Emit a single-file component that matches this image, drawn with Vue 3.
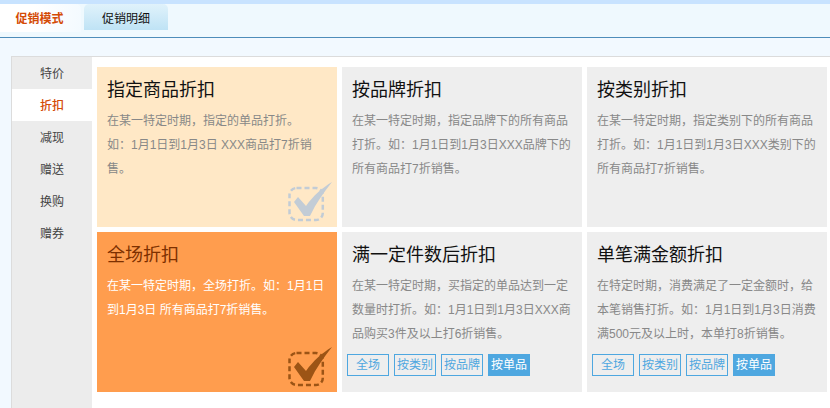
<script setup>
const tabs = [
  { label: '促销模式', active: true },
  { label: '促销明细', active: false },
]
const navItems = ['特价', '折扣', '减现', '赠送', '换购', '赠券']
const filters = ['全场', '按类别', '按品牌', '按单品']
const cards = [
  { title: '指定商品折扣', lines: ['在某一特定时期，指定的单品打折。', '如：1月1日到1月3日 XXX商品打7折销售。'], state: 'hover' },
  { title: '按品牌折扣', lines: ['在某一特定时期，指定品牌下的所有商品打折。如：1月1日到1月3日XXX品牌下的所有商品打7折销售。'] },
  { title: '按类别折扣', lines: ['在某一特定时期，指定类别下的所有商品打折。如：1月1日到1月3日XXX类别下的所有商品打7折销售。'] },
  { title: '全场折扣', lines: ['在某一特定时期，全场打折。如：1月1日到1月3日 所有商品打7折销售。'], state: 'selected' },
  { title: '满一定件数后折扣', lines: ['在某一特定时期，买指定的单品达到一定数量时打折。如：1月1日到1月3日XXX商品购买3件及以上打6折销售。'], filters: true },
  { title: '单笔满金额折扣', lines: ['在特定时期，消费满足了一定金额时，给本笔销售打折。如：1月1日到1月3日消费满500元及以上时，本单打8折销售。'], filters: true },
]
</script>

<template>
  <div class="page">
    <header class="tabbar">
      <div
        v-for="tab in tabs"
        :key="tab.label"
        class="tab"
        :class="{ active: tab.active }"
      >{{ tab.label }}</div>
    </header>

    <section class="panel">
      <nav class="side">
        <div
          v-for="item in navItems"
          :key="item"
          class="side-item"
          :class="{ current: item === '折扣' }"
        >{{ item }}</div>
      </nav>

      <main class="grid">
        <article
          v-for="card in cards"
          :key="card.title"
          class="card"
          :class="card.state"
        >
          <h2 class="title">{{ card.title }}</h2>
          <p v-for="line in card.lines" :key="line" class="desc">{{ line }}</p>

          <div v-if="card.filters" class="filters">
            <span
              v-for="(f, i) in filters"
              :key="f"
              class="filter"
              :class="{ on: i === 3 }"
            >{{ f }}</span>
          </div>

          <svg v-if="card.state" class="check" viewBox="0 0 46 42" width="46" height="42" aria-hidden="true">
            <rect x="2.5" y="6" width="33.3" height="32" rx="7" class="box" />
            <path d="M7 20 L11 15 L19 24 C26 14 35 6 45 0 C37 10 29 21 23 34 L17 34 Z" class="tick" />
          </svg>
        </article>
      </main>
    </section>
  </div>
</template>

<style>
html, body { margin: 0; background: #f2f9ff; }
</style>

<style scoped>
.page {
  width: 830px;
  height: 408px;
  overflow: hidden;
  background: #f2f9ff;
  font-family: "Liberation Sans", "Noto Sans CJK SC", sans-serif;
}
.tabbar {
  display: flex;
  align-items: flex-start;
  gap: 3px;
  height: 33px;
  border-top: 4px solid #c8e3ff;
  border-bottom: 1px solid #4e8dba;
  margin-bottom: 18px;
  background: #eff9fe;
}
.tab {
  width: 84px;
  height: 26px;
  border-radius: 5px 5px 0 0;
  background: linear-gradient(#e0f2fb, #bfe3f5);
  color: #111;
  font-size: 12px;
  line-height: 30px;
  text-align: center;
}
.tab.active {
  width: 79px;
  height: 28px;
  padding-right: 2px;
  border-radius: 0 5px 0 0;
  background: linear-gradient(100deg, #fff 40%, #f3faff);
  color: #d44b06;
  font-weight: 700;
}
.panel {
  display: flex;
  height: 352px;
  margin-left: 11px;
  border-top: 1px solid #dcdcdc;
  border-left: 1px solid #dcdcdc;
  background: #fff;
}
.side {
  width: 80px;
  flex: none;
  background: #ececec;
}
.side-item {
  height: 32px;
  color: #444;
  font-size: 12px;
  line-height: 34px;
  text-align: center;
}
.side-item.current {
  background: #fff;
  color: #d44b06;
  font-weight: 500;
}
.grid {
  display: grid;
  grid-template-columns: repeat(3, 240px);
  grid-auto-rows: 160px;
  gap: 5px;
  padding: 10px 0 0 5px;
}
.card {
  position: relative;
  background: #eeeeee;
  padding: 10px 10px 0;
  box-sizing: border-box;
  color: #888;
}
.card.hover { background: #ffe8c6; }
.card.selected { background: #ff9d4e; color: #fff; }
.title {
  margin: 0 0 6px;
  color: #111;
  font-size: 18px;
  font-weight: 400;
  line-height: 26px;
}
.selected .title { color: #7d3000; }
.desc {
  margin: 0;
  font-size: 12px;
  line-height: 24px;
}
.filters {
  position: absolute;
  left: 5px;
  top: 122px;
  display: flex;
  gap: 5px;
}
.filter {
  width: 42px;
  height: 22px;
  box-sizing: border-box;
  border: 1px solid #4ea7e0;
  color: #4ea7e0;
  font-size: 12px;
  line-height: 21px;
  text-align: center;
  white-space: nowrap;
}
.filter.on {
  background: #4ea7e0;
  color: #fff;
}
.check {
  position: absolute;
  left: 190px;
  top: 115px;
}
.box {
  fill: none;
  stroke: #c2ccd6;
  stroke-width: 2.5;
  stroke-dasharray: 5 3;
}
.tick { fill: #c2ccd6; }
.selected .box { stroke: #9c5415; }
.selected .tick { fill: #9c5415; }
</style>
